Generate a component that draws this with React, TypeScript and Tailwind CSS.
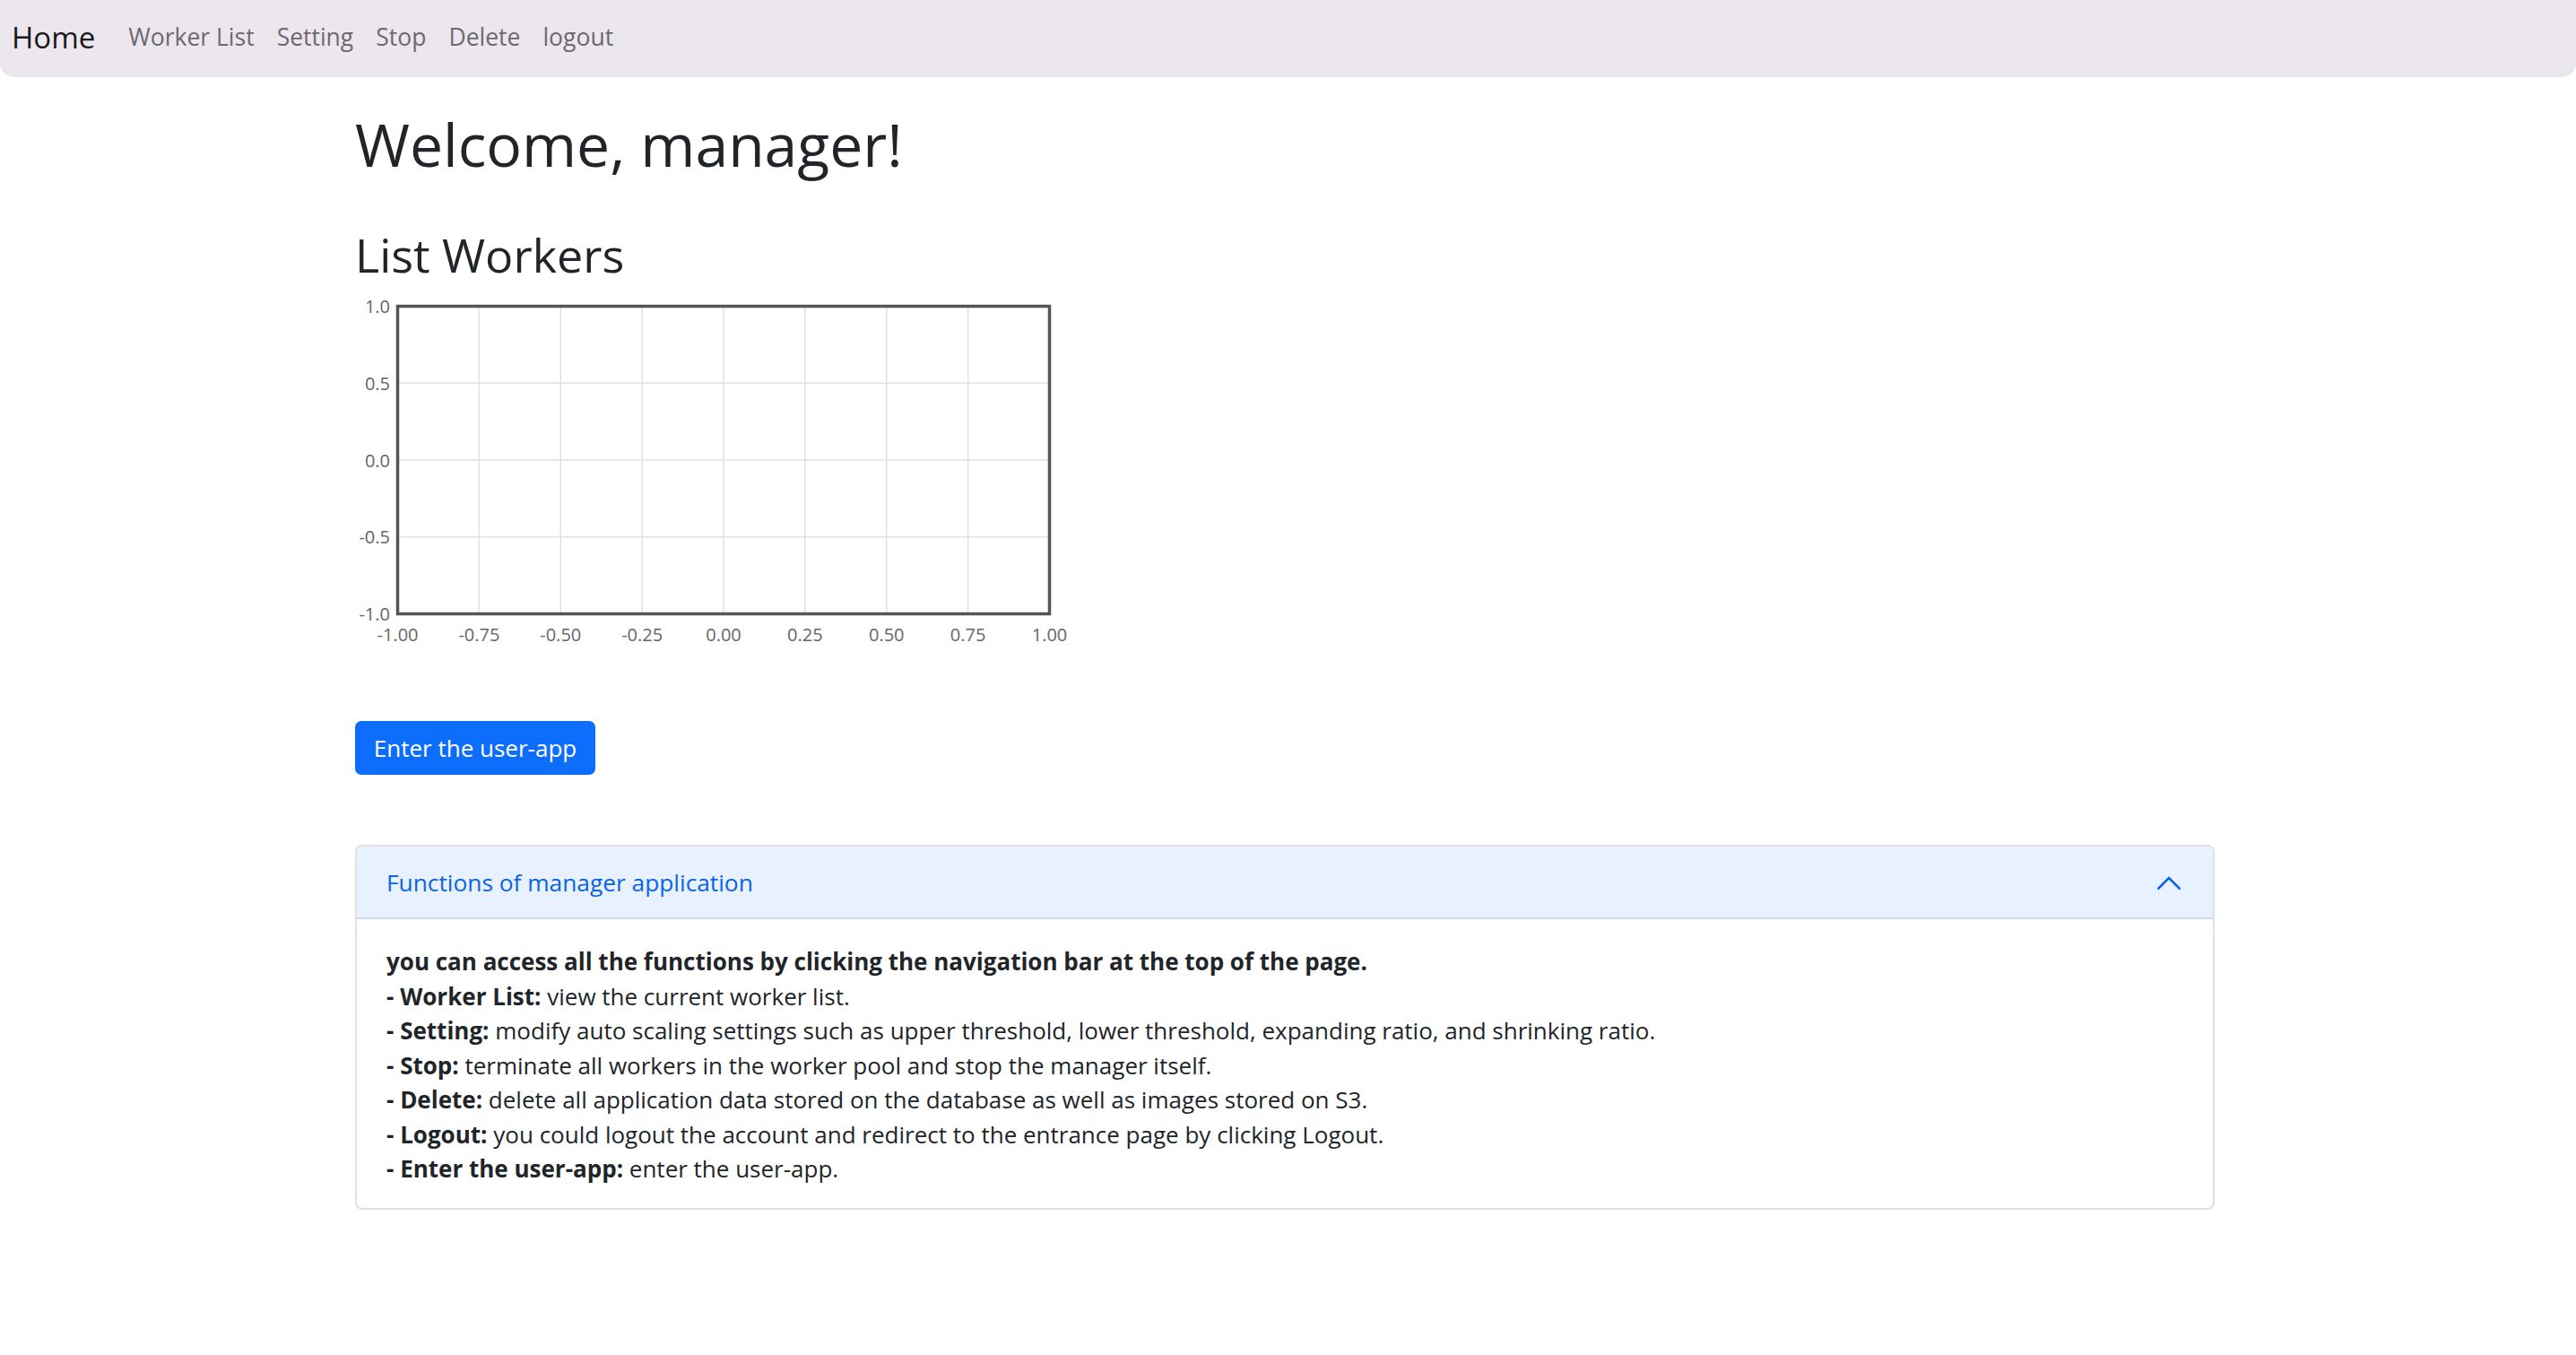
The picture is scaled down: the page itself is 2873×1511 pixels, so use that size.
import React from "react";

const font = { fontFamily: '"Open Sans", "Noto Sans", sans-serif' };

function Chart() {
  const left = 47.5;
  const top = 13.5;
  const w = 727;
  const h = 343;
  const xs = ["-1.00", "-0.75", "-0.50", "-0.25", "0.00", "0.25", "0.50", "0.75", "1.00"];
  const ys = ["1.0", "0.5", "0.0", "-0.5", "-1.0"];
  return (
    <svg width="814" height="400" viewBox="0 0 814 400" className="block">
      {xs.map((_, i) =>
        i > 0 && i < 8 ? (
          <line key={"v" + i} x1={left + (w / 8) * i} y1={top} x2={left + (w / 8) * i} y2={top + h} stroke="#e1e1e1" strokeWidth="1.5" />
        ) : null
      )}
      {ys.map((_, j) =>
        j > 0 && j < 4 ? (
          <line key={"h" + j} x1={left} y1={top + (h / 4) * j} x2={left + w} y2={top + (h / 4) * j} stroke="#e1e1e1" strokeWidth="1.5" />
        ) : null
      )}
      <rect x={left} y={top} width={w} height={h} fill="none" stroke="#555" strokeWidth="3.5" />
      {ys.map((t, j) => (
        <text key={t} x="39" y={top + (h / 4) * j} textAnchor="end" dominantBaseline="central" fontSize="20" fill="#666" style={font}>
          {t}
        </text>
      ))}
      {xs.map((t, i) => (
        <text key={t} x={left + (w / 8) * i} y="379" textAnchor="middle" dominantBaseline="central" fontSize="20" fill="#666" style={font}>
          {t}
        </text>
      ))}
    </svg>
  );
}

export default function App() {
  const items = [
    ["Worker List:", "view the current worker list."],
    ["Setting:", "modify auto scaling settings such as upper threshold, lower threshold, expanding ratio, and shrinking ratio."],
    ["Stop:", "terminate all workers in the worker pool and stop the manager itself."],
    ["Delete:", "delete all application data stored on the database as well as images stored on S3."],
    ["Logout:", "you could logout the account and redirect to the entrance page by clicking Logout."],
    ["Enter the user-app:", "enter the user-app."],
  ];

  return (
    <div className="min-h-screen bg-white text-[#212529]" style={font}>
      <nav className="h-[86px] bg-[#ece7ee] rounded-b-[16px] flex items-center pl-[13px] pb-[3px]">
        <a className="text-[33px] leading-none text-[#1a191b] mr-[37px]">Home</a>
        <div className="flex items-center gap-[25px] text-[26.5px] leading-none text-[#6c696e]">
          <a>Worker List</a>
          <a>Setting</a>
          <a>Stop</a>
          <a>Delete</a>
          <a>logout</a>
        </div>
      </nav>

      <main className="ml-[396px] w-[2074px]">
        <h1 className="mt-[41px] text-[66px] leading-none">Welcome, manager!</h1>
        <h2 className="mt-[65px] text-[52px] leading-none">List Workers</h2>

        <div className="mt-[18px]">
          <Chart />
        </div>

        <button className="mt-[76px] h-[60px] w-[268px] rounded-[7px] bg-[#0d6efd] text-white text-[26px] leading-none">
          Enter the user-app
        </button>

        <div className="mt-[78px] border-2 border-[#dee2e6] rounded-[8px] overflow-hidden">
          <div className="h-[81px] bg-[#e7f1ff] flex items-center justify-between pl-[33px] pr-[35px] shadow-[inset_0_-2px_0_rgba(0,0,0,0.1)]">
            <span className="text-[26.3px] text-[#0c63e4]">Functions of manager application</span>
            <svg width="28" height="16" viewBox="0 0 28 16" fill="none">
              <path d="M1.5 14.5L14 2L26.5 14.5" stroke="#0c63e4" strokeWidth="2.5" />
            </svg>
          </div>
          <div className="pt-[28px] pb-[24px] pl-[33px] text-[26px] leading-[38.5px]">
            <div className="font-bold">you can access all the functions by clicking the navigation bar at the top of the page.</div>
            {items.map(([k, v]) => (
              <div key={k}>
                <span className="font-bold">- {k}</span> {v}
              </div>
            ))}
          </div>
        </div>
      </main>
    </div>
  );
}
